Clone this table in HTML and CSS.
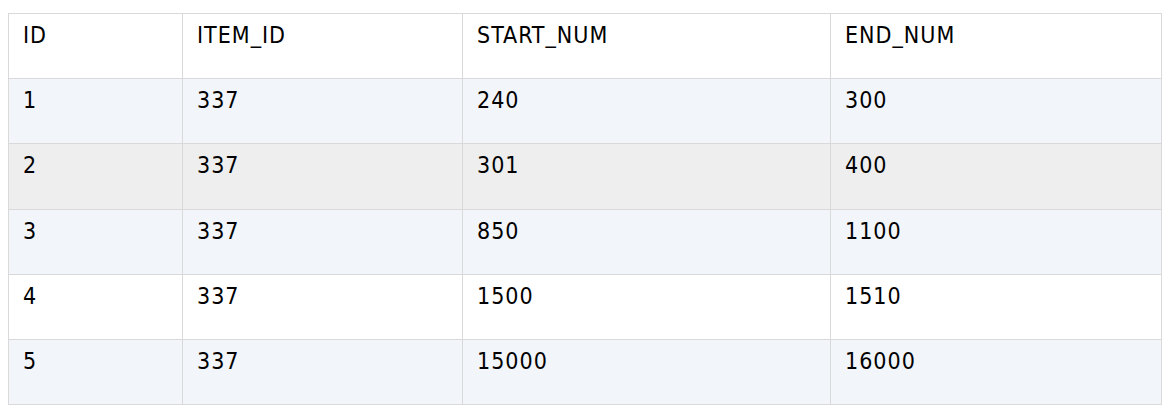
FILE: index.html
```html
<!DOCTYPE html>
<html>
<head>
<meta charset="utf-8">
<link rel="stylesheet" href="styles.css">
</head>
<body>
<table class="data">
  <colgroup>
    <col class="c1"><col class="c2"><col class="c3"><col class="c4">
  </colgroup>
  <thead>
    <tr><th>ID</th><th>ITEM_ID</th><th>START_NUM</th><th>END_NUM</th></tr>
  </thead>
  <tbody>
    <tr class="odd"><td>1</td><td>337</td><td>240</td><td>300</td></tr>
    <tr class="hover"><td>2</td><td>337</td><td>301</td><td>400</td></tr>
    <tr class="odd"><td>3</td><td>337</td><td>850</td><td>1100</td></tr>
    <tr class="even"><td>4</td><td>337</td><td>1500</td><td>1510</td></tr>
    <tr class="odd"><td>5</td><td>337</td><td>15000</td><td>16000</td></tr>
  </tbody>
</table>
</body>
</html>
```
FILE: styles.css
```css
html, body {
  background: #ffffff;
}
body {
  margin: 13px 8px 8px 8px;
  font-family: "DejaVu Sans Condensed", "DejaVu Sans", sans-serif;
  font-stretch: condensed;
  color: #000000;
}
.data {
  border-collapse: collapse;
  width: 1153px;
  table-layout: fixed;
  font-size: 23px;
  line-height: 27px;
  letter-spacing: 1px;
}
.c1 { width: 174px; }
.c2 { width: 280px; }
.c3 { width: 368px; }
.c4 { width: 331px; }
.data th,
.data td {
  border: 1px solid #d9d9d9;
  padding: 8px 14px 29px 14px;
  text-align: left;
  vertical-align: top;
  font-weight: normal;
  height: 27px;
}
.data tr.hover td { padding-bottom: 30px; }
.data thead tr { background: #ffffff; }
.data tr.odd { background: #f2f5fa; }
.data tr.even { background: #ffffff; }
.data tr.hover { background: #eeeeee; }
```
